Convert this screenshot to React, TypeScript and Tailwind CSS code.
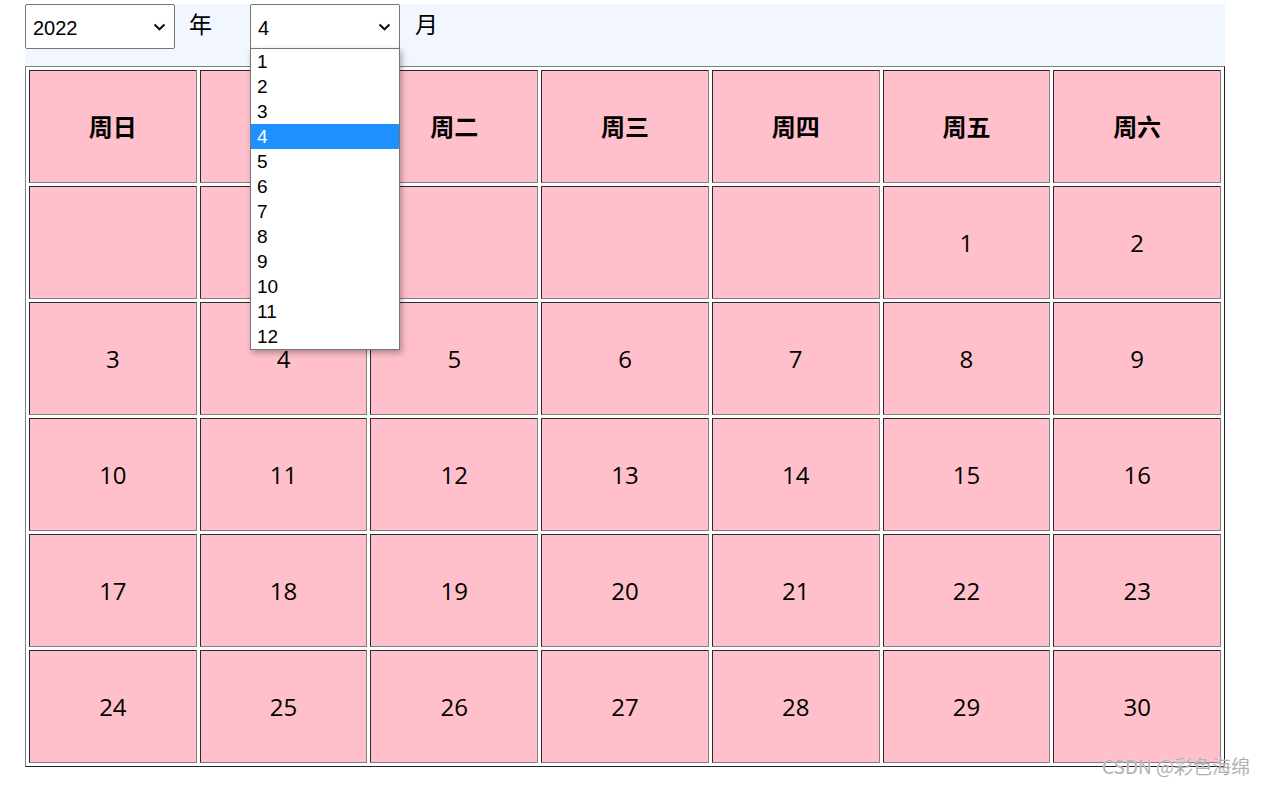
import React from "react";

const WEEK = ["周日", "周一", "周二", "周三", "周四", "周五", "周六"];
const MONTHS = Array.from({ length: 12 }, (_, i) => i + 1);

// April 2022 starts on a Friday
const DAYS: (number | null)[] = [
  null, null, null, null, null, 1, 2,
  ...Array.from({ length: 28 }, (_, i) => i + 3),
];

const Chevron = () => (
  <svg width="13" height="8" viewBox="0 0 13 8" className="shrink-0">
    <path d="M1.5 1.5 L6.5 6.3 L11.5 1.5" fill="none" stroke="#111" strokeWidth="2" />
  </svg>
);

function FakeSelect({ value }: { value: string }) {
  return (
    <div className="w-[150px] h-[45px] bg-white border border-[#767676] rounded-[2px] flex items-center justify-between pl-[7px] pr-[8px] text-[20px] text-black font-['Liberation_Sans',Arial,sans-serif]">
      <span className="pt-[2px]">{value}</span>
      <Chevron />
    </div>
  );
}

export default function App() {
  return (
    <div className="relative w-[1268px] h-[787px] bg-white font-['Open_Sans','Noto_Sans_CJK_SC',sans-serif]">
      <div className="pl-[25px] pt-[4px] w-[1225px]">
        {/* Toolbar */}
        <div className="h-[62px] bg-[#f2f6ff] flex items-start">
          <FakeSelect value="2022" />
          <span className="ml-[14px] mt-[5px] text-[23px] leading-[28px] text-black font-['Noto_Sans_CJK_SC',sans-serif]">年</span>
          <div className="relative ml-[38px]">
            <FakeSelect value="4" />
            {/* open option list */}
            <div className="absolute left-0 top-[44px] w-[150px] bg-white border border-[#767676] shadow-[2px_3px_6px_rgba(0,0,0,0.3)] z-10 font-['Liberation_Sans',Arial,sans-serif] text-[19px]">
              {MONTHS.map((m) => (
                <div
                  key={m}
                  className={
                    m === 4
                      ? "h-[25px] leading-[25px] pl-[6px] bg-[#1e90ff] text-white"
                      : "h-[25px] leading-[25px] pl-[6px] text-black"
                  }
                >
                  {m}
                </div>
              ))}
            </div>
          </div>
          <span className="ml-[15px] mt-[5px] text-[23px] leading-[28px] text-black font-['Noto_Sans_CJK_SC',sans-serif]">月</span>
        </div>

        {/* Calendar */}
        <div className="w-[1200px] border border-t-[#808080] border-l-[#808080] border-b-[#222] border-r-[#222] p-[3px] grid grid-cols-7 gap-[3px]">
          {WEEK.map((w) => (
            <div
              key={w}
              className="h-[113px] bg-[#ffc0cb] border border-t-[#2b2b2b] border-l-[#2b2b2b] border-b-[#808080] border-r-[#808080] flex items-center justify-center text-[24px] font-bold text-black"
            >
              {w}
            </div>
          ))}
          {DAYS.map((d, i) => (
            <div
              key={i}
              className="h-[113px] bg-[#ffc0cb] border border-t-[#2b2b2b] border-l-[#2b2b2b] border-b-[#808080] border-r-[#808080] flex items-center justify-center text-[24px] text-black"
            >
              {d ?? ""}
            </div>
          ))}
        </div>
      </div>

      {/* watermark */}
      <div className="absolute left-[1102px] top-[752px] text-[19px] text-[#b0b0b0] [text-shadow:0_0_1px_#ffffff] font-['Noto_Sans_CJK_SC',sans-serif]">
        CSDN @彩色海绵
      </div>
    </div>
  );
}
